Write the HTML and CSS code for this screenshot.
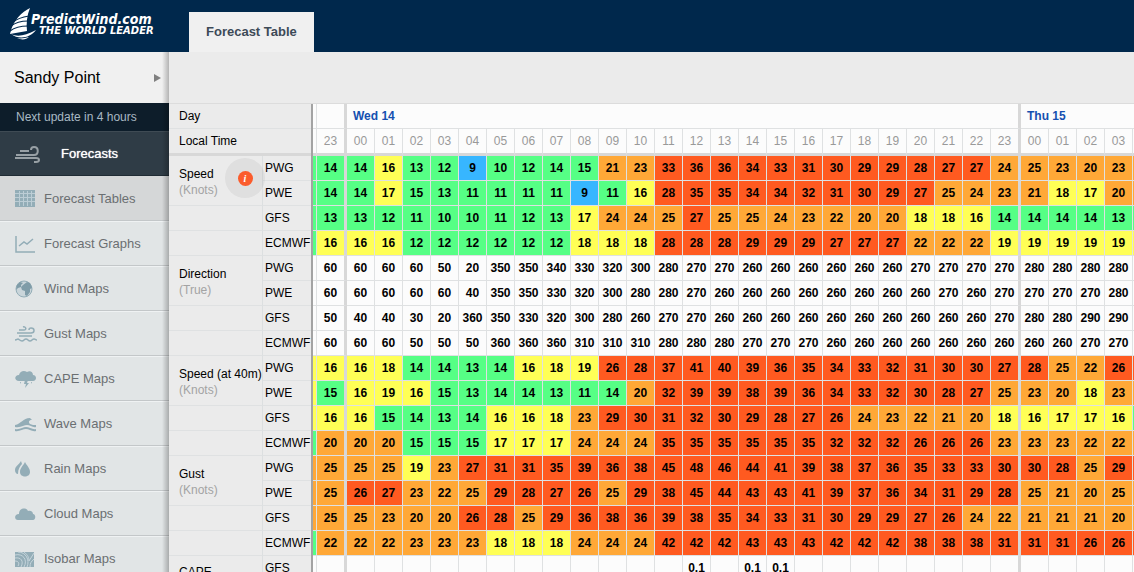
FILE: index.html
```
<!doctype html>
<html lang="en">
	<head>
		<meta charset="utf-8">
		<title>PredictWind - Forecast Table</title>
		<link rel="stylesheet" href="styles.css">
	</head>
	<body>
		<!-- Top bar -->
		<header>
			<a class="logo" href="#">
				<svg width="28" height="32" viewBox="0 0 28 32" fill="#fff">
					<path d="M20 0C12 4 3 12 0 26l17-3c-1-7 0-16 3-23z"/>
					<path d="M3 14c5-4 10-5 16-6M1 18c5-4 10-5 17-5M0 23c5-4 10-5 18-5" fill="none" stroke="#00284c" stroke-width="1.200"/>
					<path d="M1 26c6 3 14 2 25-4-6 8-17 10-25 4z"/>
					<path d="M7 30c4 1 8 0 12-1-3 3-8 3-12 1z"/>
				</svg>
				<span class="brand">
					<strong>PredictWind.com</strong>
					<em>THE WORLD LEADER</em>
				</span>
			</a>
			<a class="tab" href="#">Forecast Table</a>
		</header>
		<div class="page">
			<!-- Side menu -->
			<nav>
				<button class="place">Sandy Point <span class="arrow"></span></button>
				<p class="update">Next update in 4 hours</p>
				<a class="section" href="#">
					<svg width="25" height="18" viewBox="0 0 25 18" fill="none" stroke="#98a0a5" stroke-width="2">
						<path d="M5 6h9M1 10h18c5 0 5-8 0-8-2 0-3 1-3 3M0 13h21c4 0 4 4 0 4h-2"/>
					</svg>
					Forecasts
				</a>
				<ul>
					<li class="active"><a href="#">
						<svg viewBox="0 0 22 18"><path fill="#93adb7" d="M0 0h20v17H0z"/><path stroke="#bccdd5" fill="none" d="M0 3.500h20M0 7.500h20M0 11.500h20M4.500 1v15M8.500 1v15M12.500 1v15M16.500 1v15"/></svg>
						Forecast Tables</a></li>
					<li><a href="#">
						<svg viewBox="0 0 22 18" fill="none" stroke="#93adb7" stroke-width="1.500"><path d="M1 1v16h19M4 11l5-4 3 2 6-5"/></svg>
						Forecast Graphs</a></li>
					<li><a href="#">
						<svg viewBox="0 0 22 18"><circle cx="9" cy="9" r="8" fill="#c9d5da" stroke="#93adb7"/><path fill="#7f9ca8" d="M2 5l3-3 3 1-2 2 0 2-3 1-2 2zM8 5l4-3 3 1 2 5-2 1 0 3-3 4-2-1 0-4-3-1-1-3z"/></svg>
						Wind Maps</a></li>
					<li><a href="#">
						<svg viewBox="0 0 22 18" fill="none" stroke="#93adb7" stroke-width="1.500"><path d="M2 8h14c4 0 4-5 0-5-2 0-2 1-2 2M4 5h5c3 0 2-4-1-3M4 11h13"/><path d="M0 15c2 0 2-1 3-1s2 2 4 2 2-2 4-2 2 2 4 2 2-2 4-2 1 1 3 1"/></svg>
						Gust Maps</a></li>
					<li><a href="#">
						<svg viewBox="0 0 22 18" fill="#93adb7"><path d="M4 11C-1 11-1 5 4 5c1-4 5-5 8-3 3-2 6 0 6 3 4 0 4 6 0 6h-5l-3 0zM10 10h3l-1 3h2l-4 5 1-4H9zM5 12h1l-1 2zM16 12h1l-1 2z"/></svg>
						CAPE Maps</a></li>
					<li><a href="#">
						<svg viewBox="0 0 22 18" fill="#93adb7"><path d="M0 10C6 9 8 3 15 3l2 2c-3 0-4 2-2 4 2 1 4 1 6 1v2c-3 1-6-2-9-2S6 13 0 12z"/><path d="M0 14c5 1 8-2 11-2s7 3 10 2v2c-4 1-7-2-10-2s-7 3-11 2z"/></svg>
						Wave Maps</a></li>
					<li><a href="#">
						<svg viewBox="0 0 22 18" fill="#93adb7"><path d="M10 2c2 4 5 6 5 10 0 6-10 6-10 0 0-4 3-6 5-10z"/><path d="M6 1C4 5 0 6 0 10c0 2 1 4 3 4C3 9 5 6 7 4z"/></svg>
						Rain Maps</a></li>
					<li><a href="#">
						<svg viewBox="0 0 22 18" fill="#93adb7"><path d="M3 15c-4 0-4-6 1-6C4 3 11 2 13 6c3-1 5 1 5 3 3 0 3 6 0 6z"/></svg>
						Cloud Maps</a></li>
					<li><a href="#">
						<svg viewBox="0 0 22 18"><path fill="#93adb7" d="M0 2h19v15H0z"/><path fill="none" stroke="#c6d5dc" d="M0 5c8-2 13 5 9 12M0 8c6-1 9 3 6 9M0 11c3 0 5 2 3 5M3 2c8 0 12 8 9 15M9 2c4 3 5 6 5 9l5-8M15 17c0-4 1-5 4-8"/></svg>
						Isobar Maps</a></li>
				</ul>
			</nav>
			<main>
				<div class="toolbar"></div>
				<div class="forecast">
					<!-- Fixed columns: parameter and model -->
					<table class="labels">
						<thead>
							<tr><th colspan="2">Day</th></tr>
							<tr class="time"><th colspan="2">Local Time</th></tr>
						</thead>
						<tbody></tbody>
					</table>
					<!-- Hourly columns -->
					<div class="scroller">
						<table class="hours">
							<thead>
								<tr>
									<th class="cut"></th>
									<th class="last"></th>
									<th class="day last" colspan="24">Wed 14</th>
									<th class="day" colspan="5">Thu 15</th>
								</tr>
								<tr class="time"></tr>
							</thead>
							<tbody></tbody>
						</table>
					</div>
				</div>
			</main>
		</div>
		<script>
			// Each row: model, level of the hour cut off at the left, values, level of the hour cut off at the right
			const groups = [
				{name: "Speed", unit: "(Knots)", info: true, colored: true, rows: [
					["PWG", "green", "14 14 16 13 12 9 10 12 14 15 21 23 33 36 36 34 33 31 30 29 29 28 27 27 24 25 23 20 23", "orange"],
					["PWE", "green", "14 14 17 15 13 11 11 11 11 9 11 16 28 35 35 34 34 32 31 30 29 27 25 24 23 21 18 17 20", "orange"],
					["GFS", "green", "13 13 12 11 10 10 11 12 13 17 24 24 25 27 25 25 24 23 22 20 20 18 18 16 14 14 14 14 13", "green"],
					["ECMWF", "green", "16 16 16 12 12 12 12 12 12 18 18 18 28 28 28 29 29 29 27 27 27 22 22 22 19 19 19 19 19", "yellow"]
				]},
				{name: "Direction", unit: "(True)", rows: [
					["PWG", "", "60 60 60 60 50 20 350 350 340 330 320 300 280 270 270 260 260 260 260 260 260 270 270 270 270 280 280 280 280", ""],
					["PWE", "", "60 60 60 60 60 40 350 350 330 320 300 280 280 270 260 260 260 260 260 260 260 260 270 260 270 270 270 270 280", ""],
					["GFS", "", "50 40 40 30 20 360 350 330 320 300 280 260 270 270 260 260 260 260 260 260 260 260 260 260 270 280 280 290 290", ""],
					["ECMWF", "", "60 60 60 50 50 50 360 360 360 310 310 310 280 280 280 270 270 270 260 260 260 260 260 260 260 260 260 270 270", ""]
				]},
				{name: "Speed (at 40m)", unit: "(Knots)", colored: true, rows: [
					["PWG", "yellow", "16 16 18 14 14 13 14 16 18 19 26 28 37 41 40 39 36 35 34 33 32 31 30 30 27 28 25 22 26", "red"],
					["PWE", "yellow", "15 16 19 16 15 13 14 14 13 11 14 20 32 39 39 38 39 36 34 33 32 30 28 27 25 23 20 18 23", "orange"],
					["GFS", "yellow", "16 16 15 14 13 14 16 16 18 23 29 30 31 32 30 29 28 27 26 24 23 22 21 20 18 16 17 17 16", "green"],
					["ECMWF", "green", "20 20 20 15 15 15 17 17 17 24 24 24 35 35 35 35 35 35 32 32 32 26 26 26 23 23 23 22 22", "orange"]
				]},
				{name: "Gust", unit: "(Knots)", colored: true, rows: [
					["PWG", "orange", "25 25 25 19 23 27 31 31 35 39 36 38 45 48 46 44 41 39 38 37 36 35 33 33 30 30 28 25 29", "red"],
					["PWE", "orange", "25 26 27 23 22 25 29 28 27 26 25 29 38 45 44 43 43 41 39 37 36 34 31 29 28 25 21 20 25", "orange"],
					["GFS", "orange", "25 25 23 20 20 26 28 25 29 36 38 36 39 38 35 34 33 31 30 29 29 27 26 24 22 21 21 21 20", "orange"],
					["ECMWF", "green", "22 22 22 23 23 23 18 18 18 24 24 24 42 42 42 43 43 43 42 42 42 38 38 38 31 31 31 26 26", "red"]
				]},
				{name: "CAPE", unit: "", rows: [
					["GFS", "", "- - - - - - - - - - - - - 0.1 - 0.1 0.1 - - - - - - - - - - - -", ""]
				]}
			];

			// Wind strength to colour class
			function level(knots) {
				if (knots < 10) return "blue";
				if (knots < 16) return "green";
				if (knots < 20) return "yellow";
				if (knots < 26) return "orange";
				return "red";
			}

			function addCell(row, tag, text, className) {
				const cell = document.createElement(tag);
				cell.textContent = text;
				cell.className = className;
				row.appendChild(cell);
				return cell;
			}

			// The day ends at 23h, columns 0 and 24
			function edge(i) {
				return i == 0 || i == 24 ? " last" : "";
			}

			// Hour headings
			const time = document.querySelector(".hours .time");
			addCell(time, "th", "", "cut");
			for (let i = 0; i < 29; i++) {
				addCell(time, "th", String((i + 23) % 24).padStart(2, "0"), edge(i));
			}
			addCell(time, "th", "", "");

			const labels = document.querySelector(".labels tbody");
			const hours = document.querySelector(".hours tbody");
			groups.forEach(group => {
				group.rows.forEach((data, n) => {
					const left = labels.insertRow();
					if (n == 0) {
						const th = addCell(left, "th", group.name, "name");
						th.rowSpan = group.rows.length > 1 ? 2 : 1;
						const unit = document.createElement("span");
						unit.textContent = group.unit;
						th.appendChild(unit);
						if (group.info) {
							const info = document.createElement("button");
							info.className = "info";
							info.innerHTML = "<i>i</i>";
							th.appendChild(info);
						}
					} else if (n > 1) {
						addCell(left, "td", "", "name");
					}
					addCell(left, "th", data[0], "model");

					const right = hours.insertRow();
					addCell(right, "td", "", "cut " + data[1]);
					data[2].split(" ").forEach((value, i) => {
						const color = group.colored ? level(Number(value)) : "";
						addCell(right, "td", value == "-" ? "" : value, color + edge(i));
					});
					addCell(right, "td", "", data[3]);
				});
			});
		</script>
	</body>
</html>
```
FILE: styles.css
```
* {
	box-sizing: border-box;
	margin: 0px;
	padding: 0px;
}
body {
	height: 100vh;
	overflow: hidden;
	display: flex;
	flex-direction: column;
	background: #ebebeb;
	font-family: "Liberation Sans", Arial, sans-serif;
	font-size: 12px;
	color: #000;
}
a {
	text-decoration: none;
	color: inherit;
}
button {
	border: none;
	font-family: inherit;
}
/* Top bar */
header {
	flex: none;
	display: flex;
	align-items: flex-end;
	height: 52px;
	background: #00284c;
}
.logo {
	display: flex;
	width: 189px;
	height: 44px;
	padding-left: 10px;
	color: white;
}
.brand {
	display: flex;
	flex-direction: column;
	margin-left: -7px;
	padding-top: 3px;
}
.brand strong {
	font: italic bold 14px/16px "DejaVu Sans Condensed", "DejaVu Sans", sans-serif;
}
.brand em {
	padding-left: 8px;
	font: italic bold 10px/8px "DejaVu Sans", sans-serif;
	white-space: nowrap;
}
.tab {
	height: 40px;
	padding: 0px 17px;
	background: #f0f0f0;
	color: #3d4a57;
	font-size: 13px;
	font-weight: bold;
	line-height: 40px;
}
.page {
	flex: 1;
	display: flex;
	min-height: 0px;
}
/* Side menu */
nav {
	position: relative;
	flex: none;
	width: 169px;
	background: #e1e5e6;
}
/* Shadow of the content over the menu */
nav::after {
	content: "";
	position: absolute;
	top: 0px;
	right: 0px;
	bottom: 0px;
	width: 7px;
	background: linear-gradient(to right, rgba(0,0,0,0), rgba(0,0,0,0.25));
}
.place {
	display: flex;
	justify-content: space-between;
	align-items: center;
	width: 100%;
	height: 51px;
	padding: 0px 8px 0px 14px;
	background: #f0f0f0;
	color: #000;
	font-size: 16px;
}
.arrow {
	border-left: 7px solid #808080;
	border-top: 4px solid transparent;
	border-bottom: 4px solid transparent;
}
.update {
	height: 28px;
	padding-left: 16px;
	background: #0d1d2a;
	color: #a9b9c4;
	line-height: 28px;
}
.section {
	display: flex;
	align-items: center;
	gap: 21px;
	height: 45px;
	padding-left: 15px;
	border-top: 1px solid #3f4b54;
	border-bottom: 1px solid #1f2b34;
	background: #2f3c46;
	color: white;
	font-size: 13px;
	text-shadow: 0px 0px 1px white;
}
nav ul {
	list-style-type: none;
}
nav li {
	height: 45px;
	border-top: 1px solid #eff2f3;
	border-bottom: 1px solid #c3c7c9;
	color: #6b6f72;
	font-size: 13px;
}
nav li.active {
	background: #d5d7d8;
	border-top-color: #d5d7d8;
}
nav li a {
	display: flex;
	align-items: center;
	gap: 7px;
	height: 100%;
	padding-left: 15px;
}
nav li svg {
	width: 22px;
	height: 18px;
}
/* Content */
main {
	flex: 1;
	min-width: 0px;
}
.toolbar {
	height: 51px;
}
.forecast {
	display: flex;
	align-items: flex-start;
	border-top: 1px solid #dcdcdc;
}
table {
	border-collapse: separate;
	border-spacing: 0px;
}
th, td {
	height: 25px;
	border-bottom: 1px solid #dfe1e2;
	font-size: 12px;
	line-height: 14px;
}
.time th {
	height: 27px;
	border-bottom: 3px solid #d8d8d8;
}
/* Parameter and model columns */
.labels {
	flex: none;
	width: 144px;
	border-right: 2px solid #a3a3a3;
}
.labels th {
	font-weight: normal;
	text-align: left;
	white-space: nowrap;
}
.labels thead th {
	padding-left: 10px;
}
.labels .name {
	position: relative;
	width: 94px;
	padding: 2px 0px 0px 10px;
	border-right: 1px solid #dcdfe0;
	line-height: 16px;
}
.labels .name span {
	display: block;
	color: #a3a3a3;
}
/* A single row has room for the name only */
.labels .name[rowspan="1"] {
	padding-top: 8px;
}
.labels .model {
	padding-left: 2px;
}
.info {
	position: absolute;
	top: 2px;
	left: 56px;
	display: flex;
	align-items: center;
	justify-content: center;
	width: 40px;
	height: 40px;
	border-radius: 50%;
	background: rgba(0,0,0,0.05);
}
.info i {
	width: 15px;
	height: 15px;
	border-radius: 50%;
	background: #fb5c2c;
	color: white;
	font: italic bold 10px/15px "Liberation Serif", serif;
	text-align: center;
}
/* Hourly columns */
.scroller {
	flex: 1;
	min-width: 0px;
	overflow: hidden;
	background: #fcfcfc;
}
.hours th, .hours td {
	min-width: 28px;
	border-right: 1px solid #dfe1e2;
	text-align: center;
}
.hours td {
	font-weight: bold;
}
.hours th {
	color: #999;
	font-weight: normal;
}
.hours .last {
	min-width: 30px;
	border-right: 3px solid #d8d8d8;
}
.hours .cut {
	min-width: 4px;
	width: 4px;
}
.hours .day {
	padding-left: 6px;
	color: #1550b0;
	font-weight: bold;
	text-align: left;
}
/* Wind strength */
.hours .blue {
	background: #37b6ff;
}
.hours .green {
	background: #56ff85;
}
.hours .yellow {
	background: #ffff56;
}
.hours .orange {
	background: #ffa837;
}
.hours .red {
	background: #ff5a20;
}
```
